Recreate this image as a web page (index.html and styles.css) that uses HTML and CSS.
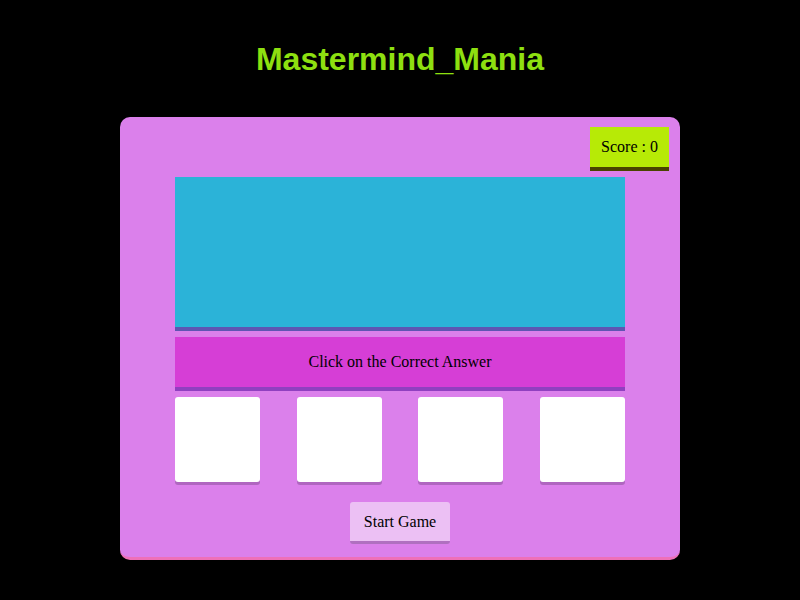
FILE: index.html
```
<!DOCTYPE html>
<html>
<head>
<meta charset="utf-8">
<link rel="stylesheet" href="styles.css">
</head>
<body>
<h1 class="title">Mastermind_Mania</h1>
<div class="game">
  <div class="score-row"><div class="score">Score : 0</div></div>
  <div class="board">
    <div class="question"></div>
    <div class="prompt">Click on the Correct Answer</div>
    <div class="choices">
      <div class="choice"></div>
      <div class="choice"></div>
      <div class="choice"></div>
      <div class="choice"></div>
    </div>
  </div>
  <div class="actions"><button class="start">Start Game</button></div>
</div>
</body>
</html>
```
FILE: styles.css
```
html, body {
  margin: 0;
  padding: 0;
  background: #000;
}
body {
  font-family: "Liberation Serif", serif;
  font-size: 16px;
  color: #000;
}
.title {
  margin: 0;
  padding-top: 41px;
  height: 117px;
  box-sizing: border-box;
  text-align: center;
  font-family: "Liberation Sans", Arial, sans-serif;
  font-weight: bold;
  font-size: 32px;
  line-height: 37px;
  color: #8ee010;
}
.game {
  width: 560px;
  margin: 0 auto;
  background: #db80eb;
  border-radius: 10px;
  border-bottom: 3px solid #ee70b8;
  padding: 10px 11px 13px;
  box-sizing: border-box;
  height: 443px;
}
.score-row {
  display: flex;
  justify-content: flex-end;
}
.score {
  background: #b7ea06;
  border-bottom: 4px solid #4a4400;
  height: 40px;
  line-height: 40px;
  padding: 0 11px;
  width: 57px;
  text-align: center;
}
.board {
  width: 450px;
  margin: 6px auto 0;
}
.question {
  height: 150px;
  background: #2bb3d8;
  border-bottom: 4px solid #5f55b2;
}
.prompt {
  margin-top: 6px;
  height: 50px;
  line-height: 50px;
  background: #d63ed6;
  border-bottom: 4px solid #9040c0;
  text-align: center;
}
.choices {
  margin-top: 6px;
  display: flex;
  justify-content: space-between;
}
.choice {
  width: 85px;
  height: 85px;
  background: #fff;
  border-radius: 3px;
  box-shadow: 0 3px 0 #b066c0;
}
.actions {
  margin-top: 20px;
  display: flex;
  justify-content: center;
}
.start {
  width: 100px;
  height: 42px;
  background: #ecc0f4;
  border: none;
  border-bottom: 3px solid #b070c0;
  border-radius: 3px;
  font-family: "Liberation Serif", serif;
  font-size: 16px;
  color: #000;
  padding: 0;
}
```
